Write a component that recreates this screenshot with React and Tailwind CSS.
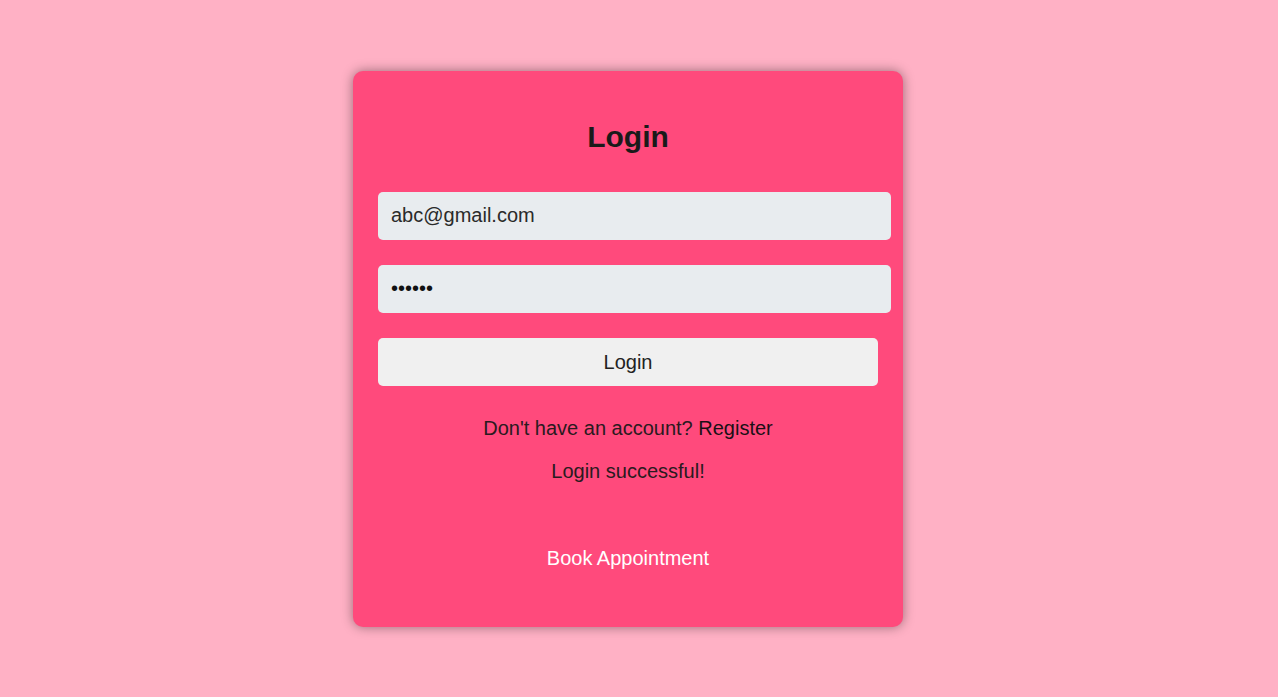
import React, { useState } from 'react';

const App = () => {
  const [email, setEmail] = useState('abc@gmail.com');
  const [password, setPassword] = useState('123456');

  return (
    <div className="flex h-[697px] w-full items-center justify-center bg-[#ffb1c5] pr-[22px] font-['Liberation_Sans',Arial,sans-serif]">
      <div className="w-[550px] h-[556px] rounded-[10px] bg-[#ff4a7c] px-[25px] pt-[49px] shadow-[0_0_12px_rgba(0,0,0,0.4)]">
        <h2 className="text-center text-[30px] font-bold leading-[34px] text-[#1a1a1a]">Login</h2>

        <form className="mt-[38px]" onSubmit={(e) => e.preventDefault()}>
          <input
            type="email"
            value={email}
            onChange={(e) => setEmail(e.target.value)}
            className="block h-[48px] w-[513px] rounded-[5px] bg-[#e8ecef] px-[13px] text-[20px] text-[#2a2a2a] outline-none"
          />
          <input
            type="password"
            value={password}
            onChange={(e) => setPassword(e.target.value)}
            className="mt-[25px] block h-[48px] w-[513px] rounded-[5px] bg-[#e8ecef] px-[13px] text-[20px] text-[#111] outline-none"
          />
          <button
            type="submit"
            className="mt-[25px] block h-[48px] w-full rounded-[5px] bg-[#f0f0f0] text-[20px] text-[#222]"
          >
            Login
          </button>
        </form>

        <p className="mt-[31px] text-center text-[20px] leading-[23px] text-[#2a1a20]">
          Don't have an account? <a className="text-[#1a1016]">Register</a>
        </p>
        <p className="mt-[20px] text-center text-[20px] leading-[23px] text-[#2a1a20]">Login successful!</p>

        <div className="mt-[64px] text-center text-[20px] leading-[23px] text-white">Book Appointment</div>
      </div>
    </div>
  );
};

export default App;
